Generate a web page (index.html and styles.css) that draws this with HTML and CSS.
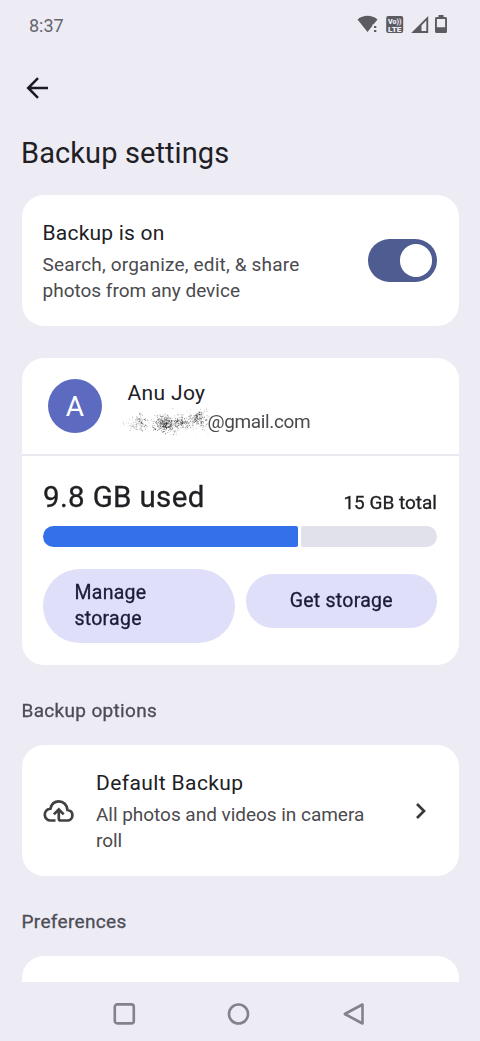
FILE: index.html
```html
<!DOCTYPE html>
<html lang="en">
<head>
<meta charset="utf-8">
<title>Backup settings</title>
<link rel="stylesheet" href="styles.css">
</head>
<body>
<div class="screen">
  <header class="status">
    <span class="time">8:37</span>
    <svg class="status-icons" width="92" height="22" viewBox="0 0 92 22">
      <g fill="#5c5b61">
        <path d="M.5 5.500C6 .5 15 .5 20.500 5.500L10.500 18Z"/>
        <path d="M15.500 10.500h5v9h-5z" fill="#edecf5"/>
        <rect x="17" y="12" width="2.300" height="2"/><rect x="17" y="16" width="2.300" height="2"/>
        <rect x="29.200" y="2" width="17" height="17" rx="2"/>
        <path d="M71.200 2v17H54.200zM69.300 6.500L64.500 11.500V17h4.800z" fill-rule="evenodd"/>
        <path d="M81.500 1h5v2h2a1.500 1.500 0 0 1 1.500 1.500v13a1.500 1.500 0 0 1-1.500 1.500h-9a1.500 1.500 0 0 1-1.500-1.500v-13A1.500 1.500 0 0 1 79.500 3h2zM79.900 5v8.300h8.200V5z" fill-rule="evenodd"/>
      </g>
      <g class="volte" fill="#edecf5"><text x="31" y="10" textLength="13.500" lengthAdjust="spacingAndGlyphs">Vo))</text><text x="31" y="18" textLength="13.500" lengthAdjust="spacingAndGlyphs">LTE</text></g>
    </svg>
  </header>

  <div class="toolbar">
    <svg width="24" height="24" viewBox="0 0 24 24" fill="none" stroke="#1b1a24" stroke-width="2.500"><path d="M23 12H3M13 2.200L3.200 12l9.800 9.800"/></svg>
  </div>
  <h1 class="title">Backup settings</h1>

  <main class="content">
    <section class="card toggle-card">
      <div class="toggle-text">
        <div class="heading is-on">Backup is on</div>
        <div class="body"><span class="search">Search, organize, edit, &amp; share</span><br><span class="photos">photos from any device</span></div>
      </div>
      <div class="switch"><div class="thumb"></div></div>
    </section>

    <section class="card storage-card">
      <div class="account">
        <div class="avatar">A</div>
        <div class="who">
          <div class="heading name">Anu Joy</div>
          <div class="mail"><canvas id="smudge" width="88" height="27"></canvas><span>@gmail.com</span></div>
        </div>
      </div>
      <div class="usage">
        <div class="figures"><span class="used">9.8 GB used</span><span class="total">15 GB total</span></div>
        <div class="meter"><div class="filled"></div><div class="free"></div></div>
        <div class="actions">
          <div class="pill manage">Manage<br>storage</div>
          <div class="pill get">Get storage</div>
        </div>
      </div>
    </section>

    <h2 class="label options">Backup options</h2>
    <section class="card default-card">
      <svg class="cloud" width="32" height="24" viewBox="0 0 32 24" fill="none" stroke="#414043" stroke-width="2.700">
        <path d="M12.500 21.500H7.900A5.900 5.900 0 0 1 7.400 9.700C8.500 5.300 11.800 2.400 15.800 2.400c4.700 0 8.300 3.600 8.700 8.600 3 .3 4.900 2.400 4.900 5.200 0 3-2.300 5.300-5.200 5.300H17.800a2 2 0 0 1-2-2V10.500M10.900 15.400l4.900-5 4.900 5"/>
      </svg>
      <div class="default-text">
        <div class="heading default">Default Backup</div>
        <div class="body all">All photos and videos in camera<br>roll</div>
      </div>
      <svg class="chevron" width="12" height="18" viewBox="0 0 12 18" fill="none" stroke="#38373a" stroke-width="2.700"><path d="M2 2l7 7-7 7"/></svg>
    </section>

    <h2 class="label prefs">Preferences</h2>
    <section class="card prefs-card"></section>
  </main>

  <nav class="nav">
    <svg width="252" height="24" viewBox="0 0 252 24" fill="none" stroke="#83828a" stroke-width="2.600" stroke-linejoin="round">
      <rect x="2.800" y="2.400" width="19" height="19" rx="2.500"/>
      <circle cx="126.500" cy="12" r="9.500"/>
      <path d="M250.500 2.500v19L232.800 12z"/>
    </svg>
  </nav>
</div>
<script src="smudge.js"></script>
</body>
</html>
```
FILE: styles.css
```css
* { box-sizing: border-box; }

body {
  margin: 0;
  background: #edecf5;
  font-family: Roboto, "Liberation Sans", sans-serif;
  color: #202024;
}

.screen {
  height: 1041px;
  display: flex;
  flex-direction: column;
  overflow: hidden;
}

.status {
  height: 50px;
  flex: none;
  display: flex;
  align-items: center;
  justify-content: space-between;
  padding: 0 31px 0 29px;
}
.time { font-size: 18px; color: #66656b; }
.volte { font-size: 8px; font-weight: 900; }

.toolbar {
  height: 83px;
  flex: none;
  padding: 26px 0 0 25px;
}
.toolbar svg { display: block; }

.title {
  margin: 0;
  flex: none;
  height: 62px;
  padding-left: 21px;
  font-size: 29px;
  font-weight: 400;
  line-height: 40px;
  letter-spacing: .1px;
}

.content {
  height: 787px;
  flex: none;
  overflow: hidden;
  padding: 0 21.500px;
}

.card {
  background: #fff;
  border-radius: 22px;
}

.heading { font-size: 21px; line-height: 30px; }
.body { font-size: 19px; line-height: 26.700px; margin-top: 3.500px; color: #4b4a4e; }
.is-on { letter-spacing: .22px; }
.search { letter-spacing: .18px; }
.photos { letter-spacing: 0; }
.all { letter-spacing: -.03px; }

.toggle-card {
  height: 131px;
  display: flex;
  justify-content: space-between;
  align-items: center;
  padding: 0 21.500px 0 21px;
}
.toggle-text, .default-text { padding-top: 2px; }
.switch {
  width: 69.500px;
  height: 43px;
  border-radius: 22px;
  background: #4e5c92;
  display: flex;
  align-items: center;
  justify-content: flex-end;
  padding-right: 5px;
}
.thumb { width: 32.500px; height: 32.500px; border-radius: 50%; background: #fff; }

.storage-card { height: 307px; margin-top: 32px; }
.account {
  height: 98px;
  border-bottom: 2.500px solid #e9e8ee;
  display: flex;
  padding: 20px 0 0 26.500px;
}
.avatar {
  width: 54px;
  height: 54px;
  margin-top: 1px;
  border-radius: 50%;
  background: #5c6bc0;
  color: #fff;
  font-size: 28px;
  line-height: 55px;
  text-align: center;
}
.who { margin-left: 20px; }
.name { padding-left: 5.500px; letter-spacing: .35px; }
.mail {
  display: flex;
  height: 27px;
  font-size: 19px;
  line-height: 27px;
  letter-spacing: -.37px;
  color: #4b4a4e;
}
.mail canvas { margin-right: -2.500px; }

.usage { padding: 20px 21.500px 0; }
.figures {
  height: 50px;
  display: flex;
  justify-content: space-between;
  align-items: baseline;
  line-height: 42px;
}
.used, .total, .pill, .label { -webkit-text-stroke: .3px currentColor; }
.used { font-size: 29.500px; letter-spacing: .35px; }
.total { font-size: 19px; position: relative; top: 2px; }
.meter { height: 21px; display: flex; gap: 3px; }
.filled {
  width: 254.500px;
  background: #3271ea;
  border-radius: 11px 2px 2px 11px;
}
.free { flex: 1; background: #e1e1eb; border-radius: 2px 11px 11px 2px; }
.actions {
  display: grid;
  grid-template-columns: 1fr 1fr;
  align-items: center;
  column-gap: 11px;
  margin-top: 22px;
}
.pill {
  background: #dfdff9;
  color: #1b1b37;
  font-size: 19.500px;
  letter-spacing: .25px;
}
.manage {
  height: 74px;
  border-radius: 37px;
  line-height: 26.500px;
  padding: 10.500px 0 0 31.500px;
}
.get {
  height: 54px;
  margin-bottom: 10px;
  border-radius: 27px;
  line-height: 54px;
  text-align: center;
}

.label {
  margin: 0;
  font-size: 19px;
  font-weight: 400;
  color: #4d4c56;
  letter-spacing: .33px;
}
.options { height: 80px; padding-top: 32px; line-height: 27px; }
.default-card {
  height: 131px;
  display: flex;
  align-items: center;
  padding: 0 32px 0 21.500px;
}
.default-text { flex: 1; margin-left: 21px; }
.default { letter-spacing: .4px; }
.chevron { flex: none; }
.prefs { height: 80px; padding-top: 32px; line-height: 27px; }
.prefs-card { height: 80px; }

.nav {
  flex: 1;
  display: flex;
  justify-content: center;
  padding: 20px 4px 0 0;
}
```
FILE: smudge.js
```js
// Scatter ink specks over the hidden part of the address.
const ctx = document.getElementById('smudge').getContext('2d');
let seed = 7;
const rand = () => (seed = (seed * 16807) % 2147483647) / 2147483647;
const spread = () => rand() + rand() + rand() - 1.5;

// x, y, horizontal spread, vertical spread, speck count, darkness
const clusters = [
  [10, 15, 9, 6, 55, .35],
  [19, 14, 5, 7, 60, .7],
  [38, 15, 9, 7, 130, .75],
  [46, 16, 8, 8, 130, .85],
  [60, 14, 10, 6, 120, .65],
  [75, 10, 7, 7, 100, .75],
  [60, 13, 28, 12, 100, .35],
  [82, 13, 5, 9, 30, .6]
];
for (const [x, y, sx, sy, n, dark] of clusters) {
  for (let i = 0; i < n; i++) {
    ctx.fillStyle = `rgba(40,40,44,${dark * (.3 + rand() * .7)})`;
    ctx.fillRect(x + spread() * sx, y + spread() * sy, .9, .9);
  }
}
```
